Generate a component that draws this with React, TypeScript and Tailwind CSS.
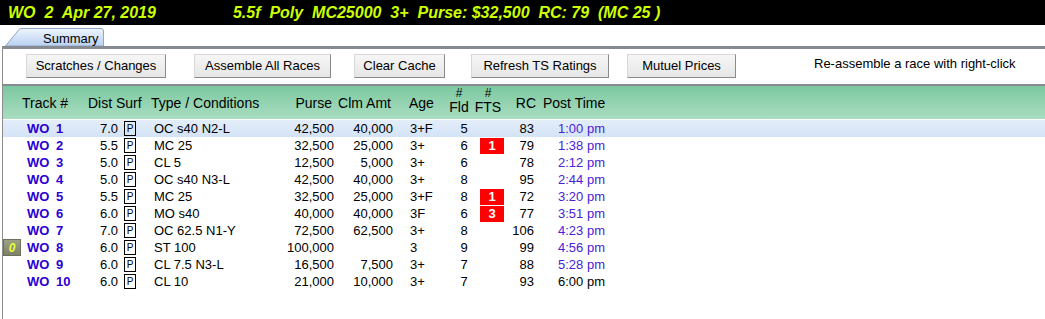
import React from "react";

type Row = {
  num: string;
  dist: string;
  type: string;
  purse: string;
  clm: string;
  age: string;
  fld: string;
  fts?: string;
  rc: string;
  post: string;
  badge?: string;
  black?: boolean;
};

const rows: Row[] = [
  { num: "1", dist: "7.0", type: "OC s40 N2-L", purse: "42,500", clm: "40,000", age: "3+F", fld: "5", rc: "83", post: "1:00 pm" },
  { num: "2", dist: "5.5", type: "MC 25", purse: "32,500", clm: "25,000", age: "3+", fld: "6", fts: "1", rc: "79", post: "1:38 pm" },
  { num: "3", dist: "5.0", type: "CL 5", purse: "12,500", clm: "5,000", age: "3+", fld: "6", rc: "78", post: "2:12 pm" },
  { num: "4", dist: "5.0", type: "OC s40 N3-L", purse: "42,500", clm: "40,000", age: "3+", fld: "8", rc: "95", post: "2:44 pm" },
  { num: "5", dist: "5.5", type: "MC 25", purse: "32,500", clm: "25,000", age: "3+F", fld: "8", fts: "1", rc: "72", post: "3:20 pm" },
  { num: "6", dist: "6.0", type: "MO s40", purse: "40,000", clm: "40,000", age: "3F", fld: "6", fts: "3", rc: "77", post: "3:51 pm" },
  { num: "7", dist: "7.0", type: "OC 62.5 N1-Y", purse: "72,500", clm: "62,500", age: "3+", fld: "8", rc: "106", post: "4:23 pm" },
  { num: "8", dist: "6.0", type: "ST 100", purse: "100,000", clm: "", age: "3", fld: "9", rc: "99", post: "4:56 pm", badge: "0" },
  { num: "9", dist: "6.0", type: "CL 7.5 N3-L", purse: "16,500", clm: "7,500", age: "3+", fld: "7", rc: "88", post: "5:28 pm" },
  { num: "10", dist: "6.0", type: "CL 10", purse: "21,000", clm: "10,000", age: "3+", fld: "7", rc: "93", post: "6:00 pm", black: true },
];

function Btn({ label, w, ml }: { label: string; w: string; ml: string }) {
  return (
    <div
      className={`${w} ${ml} h-[24px] flex items-center justify-center bg-gradient-to-b from-[#f6f6f6] to-[#e6e6e6] border border-t-[#d8d8d8] border-l-[#d8d8d8] border-r-[#8a8a8a] border-b-[#8a8a8a] text-[13px] text-black shrink-0`}
    >
      {label}
    </div>
  );
}

export default function App() {
  return (
    <div className="w-[1045px] h-[319px] bg-white overflow-hidden" style={{ fontFamily: '"Liberation Sans", Arial, sans-serif' }}>
      {/* title bar */}
      <div className="h-[25px] bg-black flex items-center text-[#ccff00] font-bold italic text-[16px] whitespace-pre">
        <span className="ml-[8px]">WO  2  Apr 27, 2019</span>
        <span className="ml-[77px]">5.5f  Poly  MC25000  3+  Purse: $32,500  RC: 79  (MC 25 )</span>
      </div>
      {/* tab strip */}
      <div className="h-[21px] relative">
        <div className="absolute left-[5px] top-[3px] w-[99px] h-[18px]">
          <svg width="99" height="18" className="absolute inset-0">
            <defs>
              <linearGradient id="tabg" x1="0" y1="0" x2="0" y2="1">
                <stop offset="0" stopColor="#eef4fd" />
                <stop offset="1" stopColor="#b9d1f1" />
              </linearGradient>
            </defs>
            <path d="M0.5 18 L14 1.5 Q15 0.5 17 0.5 L96 0.5 Q98.5 0.5 98.5 3 L98.5 18 Z" fill="url(#tabg)" stroke="#8ea6c8" />
          </svg>
          <div className="absolute left-[38px] top-[1px] text-[13px] text-black">Summary</div>
        </div>
      </div>
      {/* main area */}
      <div className="ml-[2px] border-l border-[#8c8c8c] h-[273px]">
        <div className="h-[3px] bg-[#858b91]" />
        <div className="h-[35px] flex items-center pb-[1px]">
          <Btn label="Scratches / Changes" w="w-[140px]" ml="ml-[23px]" />
          <Btn label="Assemble All Races" w="w-[137px]" ml="ml-[28px]" />
          <Btn label="Clear Cache" w="w-[91px]" ml="ml-[23px]" />
          <Btn label="Refresh TS Ratings" w="w-[138px]" ml="ml-[26px]" />
          <Btn label="Mutuel Prices" w="w-[109px]" ml="ml-[18px]" />
          <div className="ml-[78px] text-[13px] text-black -mt-[5px]">Re-assemble a race with right-click</div>
        </div>
        <div className="h-[2px] bg-[#858b91]" />
        {/* header */}
        <div className="h-[33px] bg-gradient-to-b from-[#7cc8a0] to-[#a9ddc1] flex items-end pb-[5px] text-[14px] text-black" style={{ fontFamily: '"Liberation Sans", Arial, sans-serif' }}>
          <div className="w-[85px] pl-[19px]">Track #</div>
          <div className="w-[63px]">Dist Surf</div>
          <div className="w-[120px]">Type / Conditions</div>
          <div className="w-[61px] text-right">Purse</div>
          <div className="w-[59px] text-right">Clm Amt</div>
          <div className="w-[38px] ml-[18px]">Age</div>
          <div className="w-[24px] flex flex-col items-center leading-[14px]"><span className="text-[12px]">#</span><span>Fld</span></div>
          <div className="w-[34px] flex flex-col items-center leading-[14px]"><span className="text-[12px]">#</span><span>FTS</span></div>
          <div className="w-[31px] text-right">RC</div>
          <div className="ml-[7px]">Post Time</div>
        </div>
        <div className="h-[1px] bg-white" />
        {/* rows */}
        <div className="text-[13px] text-black">
          {rows.map((r, i) => (
            <div
              key={i}
              className={`h-[17px] flex items-center ${i === 0 ? "bg-gradient-to-b from-[#e4eefa] to-[#d3e3f7]" : ""}`}
            >
              <div className="w-[24px] h-[17px] flex items-center">
                {r.badge && (
                  <div className="w-[18px] h-[17px] bg-gradient-to-b from-[#9ca184] to-[#7d8268] border border-[#6c705c] flex items-center justify-center text-[#e8ff3a] italic font-bold text-[12px]">
                    {r.badge}
                  </div>
                )}
              </div>
              <div className="w-[29px] font-bold text-[#2b00d4]">WO</div>
              <div className="w-[28px] font-bold text-[#2b00d4]">{r.num}</div>
              <div className="w-[34px] text-right">{r.dist}</div>
              <div className="ml-[6px] w-[12px] h-[15px] border border-black flex items-center justify-center text-[10px] leading-none">P</div>
              <div className="ml-[18px] w-[120px]">{r.type}</div>
              <div className="w-[60px] text-right">{r.purse}</div>
              <div className="w-[59px] text-right">{r.clm}</div>
              <div className="ml-[17px] w-[40px]">{r.age}</div>
              <div className="w-[28px] text-center">{r.fld}</div>
              <div className="ml-[2px] w-[24px] h-[16px] flex items-center justify-center">
                {r.fts && (
                  <div className="w-[24px] h-[16px] bg-[#ff0000] text-white font-bold flex items-center justify-center">{r.fts}</div>
                )}
              </div>
              <div className="w-[30px] text-right">{r.rc}</div>
              <div className={`ml-[24px] ${r.black ? "text-black" : "text-[#4a22d6]"}`}>{r.post}</div>
            </div>
          ))}
        </div>
      </div>
    </div>
  );
}
